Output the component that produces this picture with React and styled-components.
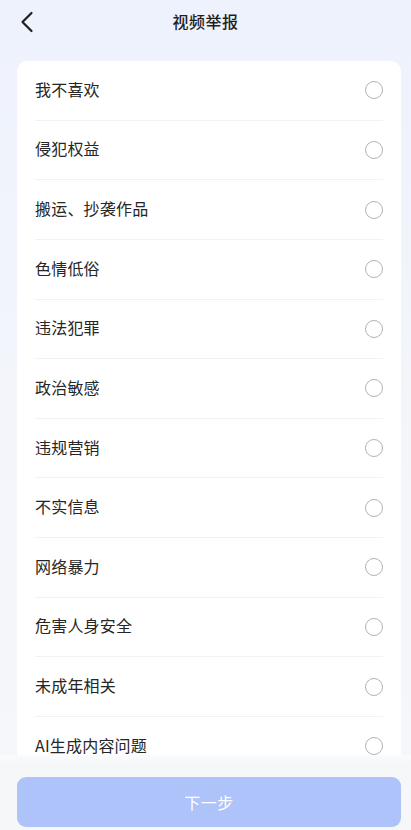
import React, { useState } from 'react';
import styled, { createGlobalStyle } from 'styled-components';

const GlobalStyle = createGlobalStyle`
  html, body {
    margin: 0;
    padding: 0;
    height: 100%;
  }
  body {
    font-family: "Noto Sans CJK SC", "Noto Sans", sans-serif;
    background: linear-gradient(180deg, #eef2fd 0%, #f3f5fb 45%, #f6f7f9 100%);
  }
`;

const Page = styled.div`
  height: 100vh;
  display: flex;
  flex-direction: column;
`;

const Header = styled.header`
  height: 44px;
  flex-shrink: 0;
  display: flex;
  align-items: center;
  justify-content: center;
  position: relative;
`;

const BackButton = styled.button`
  position: absolute;
  left: 15px;
  top: 10px;
  width: 24px;
  height: 24px;
  padding: 0;
  border: none;
  background: none;
  display: flex;
  align-items: center;
  justify-content: center;
`;

const Title = styled.h1`
  margin: 0 0 2px;
  font-size: 16px;
  font-weight: 500;
  color: #1f1f1f;
  letter-spacing: 0.5px;
`;

const Scroll = styled.main`
  flex: 1;
  overflow-y: auto;
  padding: 17px 10px 0 17px;
  scrollbar-width: none;
  &::-webkit-scrollbar { display: none; }
`;

const Card = styled.ul`
  list-style: none;
  margin: 0;
  padding: 0 18px;
  background: #fff;
  border-radius: 10px;
`;

const Row = styled.li`
  height: 59.64px;
  box-sizing: border-box;
  display: flex;
  align-items: center;
  justify-content: space-between;
  border-bottom: ${p => (p.last ? 'none' : '1px solid #f2f2f4')};
  cursor: pointer;
`;

const Label = styled.span`
  font-size: 16px;
  color: #262626;
  letter-spacing: 0.2px;
  padding-bottom: 3px;
`;

const Radio = styled.span`
  width: 18px;
  height: 18px;
  box-sizing: border-box;
  border-radius: 50%;
  border: 1.3px solid ${p => (p.checked ? '#3d6df5' : '#b3b3b3')};
  background: ${p => (p.checked ? 'radial-gradient(circle, #3d6df5 0 4px, #fff 4.5px)' : '#fff')};
`;

const Footer = styled.footer`
  flex-shrink: 0;
  height: 75px;
  box-sizing: border-box;
  padding: 22px 10px 3px 17px;
  background: linear-gradient(180deg, #fafbfc 0px, #f6f7f9 8px, #f6f7f9 100%);
`;

const NextButton = styled.button`
  display: block;
  width: 100%;
  height: 50px;
  border: none;
  border-radius: 9px;
  background: ${p => (p.active ? '#3d6df5' : '#adc3fa')};
  color: #fff;
  font-family: inherit;
  font-size: 16px;
  letter-spacing: 0.5px;
`;

const reasons = [
  '我不喜欢',
  '侵犯权益',
  '搬运、抄袭作品',
  '色情低俗',
  '违法犯罪',
  '政治敏感',
  '违规营销',
  '不实信息',
  '网络暴力',
  '危害人身安全',
  '未成年相关',
  'AI生成内容问题',
  '其他',
];

export default function App() {
  const [selected, setSelected] = useState(null);

  return (
    <Page>
      <GlobalStyle />
      <Header>
        <BackButton aria-label="返回">
          <svg width="14" height="22" viewBox="0 0 14 22" fill="none">
            <path d="M11.5 2 L2.5 11 L11.5 20" stroke="#1f1f1f" strokeWidth="2.2" strokeLinecap="round" strokeLinejoin="round" />
          </svg>
        </BackButton>
        <Title>视频举报</Title>
      </Header>

      <Scroll>
        <Card>
          {reasons.map((r, i) => (
            <Row key={r} last={i === reasons.length - 1} onClick={() => setSelected(i)}>
              <Label>{r}</Label>
              <Radio checked={selected === i} />
            </Row>
          ))}
        </Card>
      </Scroll>

      <Footer>
        <NextButton active={selected !== null}>下一步</NextButton>
      </Footer>
    </Page>
  );
}
